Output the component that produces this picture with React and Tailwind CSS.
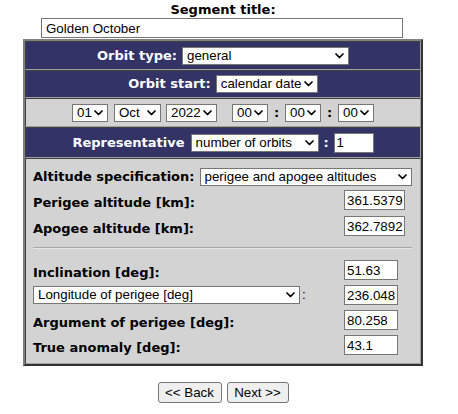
const LBL = "font-['DejaVu_Sans',Verdana,sans-serif] font-bold text-[13px] whitespace-nowrap";
const CTL = "font-['Liberation_Sans',Arial,sans-serif] text-[13.33px] text-black";

function Chevron() {
  return (
    <svg
      width="9"
      height="6"
      viewBox="0 0 9 6"
      className="pointer-events-none absolute right-[5px] top-1/2 -translate-y-1/2"
    >
      <path d="M1 1l3.5 3.5L8 1" fill="none" stroke="#000" strokeWidth="1.7" strokeLinecap="round" strokeLinejoin="round" />
    </svg>
  );
}

function Select({ value, w }) {
  return (
    <div className={'relative shrink-0 ' + w}>
      <select
        defaultValue={value}
        className={CTL + ' block h-[18px] w-full appearance-none rounded-none border border-[#767676] bg-white pl-[4px] pr-[2px] leading-[16px] outline-none'}
      >
        <option>{value}</option>
      </select>
      <Chevron />
    </div>
  );
}

function Field({ value, w }) {
  return (
    <input
      defaultValue={value}
      className={CTL + ' block h-[20px] shrink-0 border border-[#767676] bg-white pl-[2px] pr-0 outline-none ' + w}
    />
  );
}

function Row({ label, value, w, className }) {
  return (
    <div className={'flex items-end ' + className}>
      <div className={LBL + ' w-[311px] leading-[15px] text-black'}>{label}</div>
      <Field value={value} w={w} />
    </div>
  );
}

const cell = 'border border-t-[#404040] border-l-[#404040] border-b-[#a0a0a0] border-r-[#a0a0a0]';

export default function App() {
  return (
    <div className="flex w-[446px] flex-col items-center bg-white pb-[11px]">
      <div className={LBL + ' mt-[2px] h-[16px] leading-[16px] text-black'}>Segment title:</div>
      <input
        defaultValue="Golden October"
        className={CTL + ' -ml-[2px] block h-[20px] w-[362px] border border-[#767676] bg-white px-[4px] outline-none'}
      />

      <div className="mt-[1px] w-[400px] border-2 border-t-[#808080] border-l-[#808080] border-b-[#333333] border-r-[#333333]">
        <div className={cell + ' flex h-[29px] items-center justify-center gap-[5px] bg-[#333366]'}>
          <span className={LBL + ' text-white'}>Orbit type:</span>
          <Select value="general" w="w-[167px]" />
        </div>

        <div className={cell + ' flex h-[28px] items-center justify-center gap-[5px] bg-[#333366]'}>
          <span className={LBL + ' text-white'}>Orbit start:</span>
          <Select value="calendar date" w="w-[102px]" />
        </div>

        <div className={cell + ' flex h-[29px] items-center justify-center bg-[#d3d3d3]'}>
          <Select value="01" w="w-[36px]" />
          <div className="ml-[6px]">
            <Select value="Oct" w="w-[47px]" />
          </div>
          <div className="ml-[5px]">
            <Select value="2022" w="w-[51px]" />
          </div>
          <div className="ml-[15px]">
            <Select value="00" w="w-[36px]" />
          </div>
          <span className={LBL + ' w-[17px] text-center text-black'}>:</span>
          <Select value="00" w="w-[36px]" />
          <span className={LBL + ' w-[17px] text-center text-black'}>:</span>
          <Select value="00" w="w-[36px]" />
        </div>

        <div className={cell + ' flex h-[31px] items-center justify-center bg-[#333366]'}>
          <span className={LBL + ' text-white'}>Representative</span>
          <div className="ml-[6px]">
            <Select value="number of orbits" w="w-[128px]" />
          </div>
          <span className={LBL + ' w-[15px] text-center text-white'}>:</span>
          <Field value="1" w="w-[40px]" />
        </div>

        <div className={cell + ' h-[206px] bg-[#d3d3d3] pl-[7px] pr-[8px] pt-[9px]'}>
          <div className="flex h-[18px] items-center">
            <span className={LBL + ' text-black'}>Altitude specification:</span>
            <div className="ml-[5px] flex-1">
              <Select value="perigee and apogee altitudes" w="w-full" />
            </div>
          </div>
          <Row label="Perigee altitude [km]:" value="361.5379" w="w-[61px]" className="mt-[4px]" />
          <Row label="Apogee altitude [km]:" value="362.7892" w="w-[61px]" className="mt-[6px]" />
          <div className="mt-[11px] h-[2px] border-t border-b border-t-[#a8a8a8] border-b-[#e6e6e6]" />
          <Row label="Inclination [deg]:" value="51.63" w="w-[54px]" className="mt-[11px]" />
          <div className="mt-[5px] flex items-end">
            <div className="flex w-[311px] items-center">
              <Select value="Longitude of perigee [deg]" w="w-[267px]" />
              <span className={CTL + ' ml-[2px]'}>:</span>
            </div>
            <Field value="236.048" w="w-[54px]" />
          </div>
          <Row label="Argument of perigee [deg]:" value="80.258" w="w-[54px]" className="mt-[5px]" />
          <Row label="True anomaly [deg]:" value="43.1" w="w-[54px]" className="mt-[5px]" />
        </div>
      </div>

      <div className="mt-[16px] flex gap-[5px]">
        <button className={CTL + ' h-[21px] w-[64px] rounded-[3px] border border-[#767676] bg-[#efefef]'}>
          &lt;&lt; Back
        </button>
        <button className={CTL + ' h-[21px] w-[62px] rounded-[3px] border border-[#767676] bg-[#efefef]'}>
          Next &gt;&gt;
        </button>
      </div>
    </div>
  );
}
